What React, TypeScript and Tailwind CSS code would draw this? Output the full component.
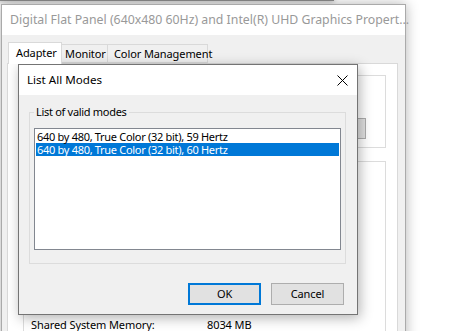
function CloseIcon({ className }: { className: string }) {
  return (
    <svg width="11" height="11" viewBox="0 0 11 11" className={className}>
      <path d="M0.5 0.5 L10.5 10.5 M10.5 0.5 L0.5 10.5" stroke="currentColor" strokeWidth="1" fill="none" />
    </svg>
  );
}

const modes = [
  "640 by 480, True Color (32 bit), 59 Hertz",
  "640 by 480, True Color (32 bit), 60 Hertz",
];

const info = [
  ["Chip Type:", "Intel(R) UHD Graphics"],
  ["DAC Type:", "Internal"],
  ["Adapter String:", "Intel(R) UHD Graphics"],
  ["Bios Information:", "Intel Video BIOS"],
  ["Total Available Graphics Memory:", "8162 MB"],
  ["Dedicated Video Memory:", "128 MB"],
  ["System Video Memory:", "0 MB"],
  ["Shared System Memory:", "8034 MB"],
];

export default function App() {
  return (
    <div className="relative h-[331px] w-[465px] overflow-hidden bg-white font-['Noto_Sans','Open_Sans',sans-serif] text-[11px] leading-[16px] tracking-[-0.1px] text-black">
      {/* window behind */}
      <div className="absolute left-[-2px] top-[-20px] h-[21px] w-[336px] border-b border-[#8c8c8c] bg-[#f0f0f0] shadow-[0_1px_5px_rgba(0,0,0,0.25)]" />

      {/* main property window */}
      <div className="absolute left-[1px] top-[4px] h-[360px] w-[405px] border border-[#aaaaaa] bg-[#f0f0f0] shadow-[0_0_12px_rgba(0,0,0,0.3)]">
        <div className="flex h-[30px] items-center justify-between bg-white pl-[8px] pr-[9px] text-[#999999]">
          <span className="whitespace-nowrap text-[12.3px] tracking-normal">
            Digital Flat Panel (640x480 60Hz) and Intel(R) UHD Graphics Propert...
          </span>
          <CloseIcon className="text-[#8f8f8f]" />
        </div>

        <div className="pl-[5px] pr-[7px] pt-[7px]">
          <div className="flex items-end whitespace-nowrap pl-[1px]">
            <div className="relative z-10 -mb-px h-[22px] w-[54px] border border-b-0 border-[#d9d9d9] bg-white pl-[7px] pt-[2px]">
              Adapter
            </div>
            <div className="h-[19px] w-[46px] border border-l-0 border-[#d9d9d9] pl-[3px] pt-px">Monitor</div>
            <div className="h-[19px] w-[100px] border border-l-0 border-[#d9d9d9] pl-[6px] pt-px">Color Management</div>
          </div>

          <div className="h-[300px] border border-[#d9d9d9] bg-white pl-[15px] pr-[11px] pt-[11px]">
            <div className="flex h-[73px] justify-end border border-[#dcdcdc] pr-[19px] pt-[42px]">
              <div className="h-[21px] w-[100px] border border-[#adadad] bg-[#e1e1e1] text-center">Properties</div>
            </div>
            <div className="mt-[13px] flex flex-col gap-[4px] border border-[#dcdcdc] pl-[7px] pt-[30px]">
              {info.map(([k, v]) => (
                <div key={k} className="flex h-[14px] items-center whitespace-nowrap">
                  <span className="w-[176px]">{k}</span>
                  <span className="w-[120px] overflow-hidden">{v}</span>
                </div>
              ))}
            </div>
          </div>
        </div>
      </div>

      {/* List All Modes dialog */}
      <div className="absolute left-[18px] top-[64px] flex h-[251px] w-[340px] flex-col border border-[#747474] bg-[#f0f0f0] shadow-[2px_3px_12px_rgba(0,0,0,0.3)]">
        <div className="flex h-[30px] items-center justify-between bg-white pl-[8px] pr-[9px]">
          <span className="text-[11.6px] tracking-normal">List All Modes</span>
          <CloseIcon className="text-black" />
        </div>

        <fieldset className="ml-[10px] mr-[11px] mt-[9px] border border-[#dcdcdc] px-[4px] pb-[13px] pt-[8px]">
          <legend className="px-[2px] tracking-[-0.3px]">List of valid modes</legend>
          <div className="h-[122px] border border-[#828790] bg-white pt-[1px] tracking-[-0.3px]">
            {modes.map((m, i) => (
              <div
                key={m}
                className={
                  i === 1
                    ? "mx-px h-[13px] whitespace-nowrap bg-[#0078d7] pl-px leading-[13px] text-white"
                    : "mx-px h-[13px] whitespace-nowrap pl-px leading-[13px]"
                }
              >
                {m}
              </div>
            ))}
          </div>
        </fieldset>

        <div className="mt-auto flex justify-end gap-[10px] pb-[9px] pr-[13px]">
          <button className="h-[22px] w-[73px] border-2 border-[#0078d7] bg-[#e1e1e1]">OK</button>
          <button className="h-[22px] w-[73px] border border-[#adadad] bg-[#e1e1e1]">Cancel</button>
        </div>
      </div>
    </div>
  );
}
